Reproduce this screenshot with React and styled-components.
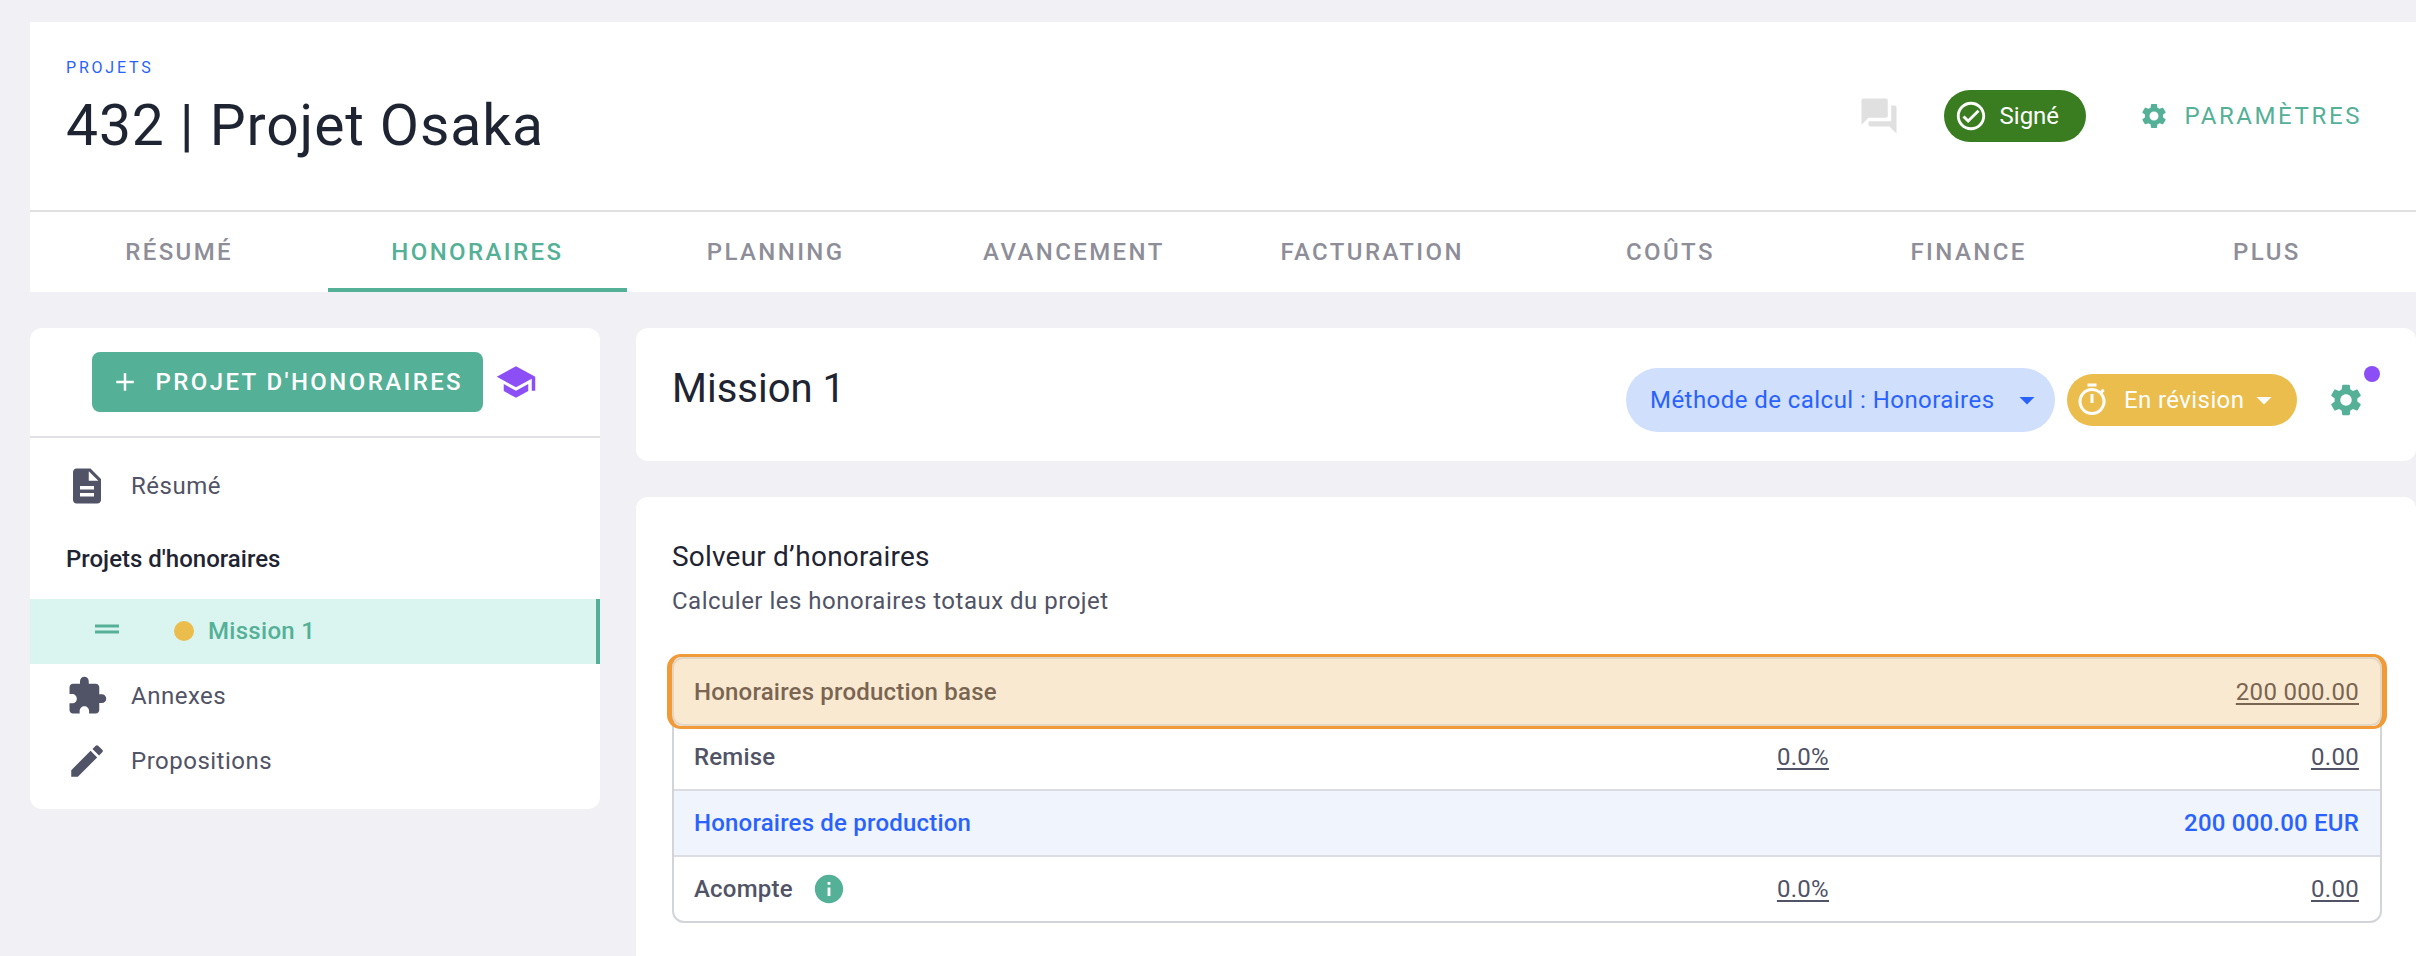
import React from "react"
import styled, { createGlobalStyle } from "styled-components"
import {
    MdAdd,
    MdArrowDropDown,
    MdDescription,
    MdDragHandle,
    MdEdit,
    MdExtension,
    MdInfo,
    MdOutlineCheckCircle,
    MdOutlineTimer,
    MdQuestionAnswer,
    MdSchool,
    MdSettings,
} from "react-icons/md"

const green = "#54b096"
const blue = "#2962ff"
const ink = "#1f2433"
const slate = "#515366"

const GlobalStyle = createGlobalStyle`
    html, body {
        margin: 0;
        height: 100%;
        overflow: hidden;
        background: #f0f0f5;
        font-family: Roboto, "Liberation Sans", sans-serif;
    }
`

const tabs = ["Résumé", "Honoraires", "Planning", "Avancement", "Facturation", "Coûts", "Finance", "Plus"]

export default function App() {
    return (
        <Page>
            <GlobalStyle />
            <Header>
                <HeaderTop>
                    <div>
                        <Eyebrow>Projets</Eyebrow>
                        <Title>432 | Projet Osaka</Title>
                    </div>
                    <HeaderActions>
                        <MdQuestionAnswer size={42} color="#e0e0e0" />
                        <SignedPill>
                            <MdOutlineCheckCircle size={34} />
                            Signé
                        </SignedPill>
                        <SettingsLink>
                            <MdSettings size={30} />
                            Paramètres
                        </SettingsLink>
                    </HeaderActions>
                </HeaderTop>
                <Tabs>
                    {tabs.map(tab => (
                        <Tab key={tab} $active={tab === "Honoraires"}>
                            {tab}
                        </Tab>
                    ))}
                </Tabs>
            </Header>
            <Columns>
                <Sidebar>
                    <SidebarTop>
                        <AddButton>
                            <MdAdd size={30} />
                            Projet d'honoraires
                        </AddButton>
                        <MdSchool size={42} color="#8b4ff5" />
                    </SidebarTop>
                    <SideList>
                        <SideItem $height={64}>
                            <SideIcon>
                                <MdDescription size={42} />
                            </SideIcon>
                            Résumé
                        </SideItem>
                        <SideHeading>Projets d'honoraires</SideHeading>
                        <ActiveItem>
                            <DragHandle size={36} />
                            <Dot />
                            Mission 1
                        </ActiveItem>
                        <SideItem $height={65}>
                            <SideIcon>
                                <MdExtension size={42} />
                            </SideIcon>
                            Annexes
                        </SideItem>
                        <SideItem $height={65}>
                            <SideIcon>
                                <MdEdit size={42} />
                            </SideIcon>
                            Propositions
                        </SideItem>
                    </SideList>
                </Sidebar>
                <Main>
                    <MissionCard>
                        <MissionTitle>Mission 1</MissionTitle>
                        <MissionActions>
                            <MethodPill>
                                Méthode de calcul : Honoraires
                                <MdArrowDropDown size={36} />
                            </MethodPill>
                            <StatusPill>
                                <MdOutlineTimer size={36} />
                                En révision
                                <StatusCaret size={36} />
                            </StatusPill>
                            <GearWrap>
                                <MdSettings size={38} />
                                <PurpleDot />
                            </GearWrap>
                        </MissionActions>
                    </MissionCard>
                    <SolverCard>
                        <SolverTitle>Solveur d’honoraires</SolverTitle>
                        <SolverText>Calculer les honoraires totaux du projet</SolverText>
                        <FeeTable>
                            <FeeRow $kind="base">
                                <span>Honoraires production base</span>
                                <span />
                                <Amount>200 000.00</Amount>
                            </FeeRow>
                            <FeeRow>
                                <span>Remise</span>
                                <Amount>0.0%</Amount>
                                <Amount>0.00</Amount>
                            </FeeRow>
                            <FeeRow $kind="total">
                                <span>Honoraires de production</span>
                                <span />
                                <span>200 000.00 EUR</span>
                            </FeeRow>
                            <FeeRow>
                                <FeeLabel>
                                    Acompte
                                    <MdInfo size={34} color={green} />
                                </FeeLabel>
                                <Amount>0.0%</Amount>
                                <Amount>0.00</Amount>
                            </FeeRow>
                        </FeeTable>
                    </SolverCard>
                </Main>
            </Columns>
        </Page>
    )
}

const Page = styled.div`
    height: 956px;
    overflow: hidden;
    padding: 22px 0 0 30px;
    box-sizing: border-box;
`

const Header = styled.header`
    background: #fff;
`

const HeaderTop = styled.div`
    height: 190px;
    box-sizing: border-box;
    padding: 36px 54px 0 36px;
    display: flex;
    justify-content: space-between;
    border-bottom: 2px solid #e0e0e0;
`

const Eyebrow = styled.div`
    font-size: 16px;
    line-height: 20px;
    letter-spacing: 2.8px;
    text-transform: uppercase;
    color: ${blue};
`

const Title = styled.h1`
    margin: 12px 0 0;
    font-size: 57px;
    line-height: 72px;
    font-weight: 400;
    letter-spacing: 0.9px;
    color: ${ink};
`

const HeaderActions = styled.div`
    display: flex;
    align-items: center;
    height: 52px;
    margin-top: 32px;
`

const SignedPill = styled.div`
    display: flex;
    align-items: center;
    gap: 12px;
    box-sizing: border-box;
    width: 142px;
    height: 52px;
    margin: 0 53px 0 44px;
    padding-left: 10px;
    border-radius: 26px;
    background: #3a7d21;
    color: #fff;
    font-size: 24px;
`

const SettingsLink = styled.div`
    display: flex;
    align-items: center;
    gap: 16px;
    color: ${green};
    font-size: 24px;
    letter-spacing: 2.6px;
    text-transform: uppercase;
`

const Tabs = styled.nav`
    display: grid;
    grid-template-columns: repeat(8, 1fr);
    height: 80px;
`

const Tab = styled.div`
    display: flex;
    align-items: center;
    justify-content: center;
    font-size: 24px;
    font-weight: 500;
    letter-spacing: 2.4px;
    text-transform: uppercase;
    color: ${p => (p.$active ? green : "#8e8e99")};
    box-shadow: ${p => (p.$active ? `inset 0 -4px 0 ${green}` : "none")};
`

const Columns = styled.div`
    display: grid;
    grid-template-columns: 570px 1fr;
    gap: 36px;
    margin-top: 36px;
    align-items: start;
`

const Sidebar = styled.aside`
    background: #fff;
    border-radius: 12px;
    height: 481px;
    overflow: hidden;
`

const SidebarTop = styled.div`
    display: flex;
    align-items: center;
    justify-content: center;
    gap: 12px;
    height: 110px;
    box-sizing: border-box;
    padding-right: 2px;
    border-bottom: 2px solid #e0e0e5;
`

const AddButton = styled.div`
    display: flex;
    align-items: center;
    gap: 16px;
    box-sizing: border-box;
    width: 391px;
    height: 60px;
    padding-left: 18px;
    border-radius: 8px;
    background: ${green};
    color: #fff;
    font-size: 24px;
    font-weight: 500;
    letter-spacing: 2.4px;
    text-transform: uppercase;
`

const SideList = styled.div`
    padding-top: 17px;
`

const SideItem = styled.div`
    display: flex;
    align-items: center;
    height: ${p => p.$height}px;
    box-sizing: border-box;
    padding: 0 0 2px 36px;
    font-size: 24px;
    letter-spacing: 0.5px;
    color: ${slate};
`

const SideIcon = styled.span`
    display: flex;
    justify-content: center;
    width: 42px;
    margin-right: 23px;
`

const SideHeading = styled.div`
    display: flex;
    align-items: center;
    height: 80px;
    padding-left: 36px;
    font-size: 24px;
    font-weight: 500;
    color: ${ink};
`

const ActiveItem = styled.div`
    display: flex;
    align-items: center;
    height: 65px;
    box-sizing: border-box;
    padding: 0 0 2px 59px;
    background: #daf5ef;
    border-right: 4px solid ${green};
    color: ${green};
    font-size: 24px;
    font-weight: 500;
    letter-spacing: 0.3px;
`

const DragHandle = styled(MdDragHandle)`
    margin-bottom: 4px;
`

const Dot = styled.span`
    width: 20px;
    height: 20px;
    margin: 0 14px 0 49px;
    border-radius: 50%;
    background: #eabd4d;
`

const Main = styled.main`
    display: flex;
    flex-direction: column;
    gap: 36px;
`

const MissionCard = styled.section`
    display: flex;
    justify-content: space-between;
    height: 133px;
    box-sizing: border-box;
    padding: 33px 36px;
    background: #fff;
    border-radius: 12px;
`

const MissionTitle = styled.h2`
    margin: 0;
    font-size: 40px;
    line-height: 56px;
    font-weight: 400;
    color: ${ink};
`

const MissionActions = styled.div`
    display: flex;
    align-items: center;
    height: 64px;
    margin-top: 7px;
    margin-right: 15px;
`

const MethodPill = styled.div`
    display: flex;
    align-items: center;
    justify-content: space-between;
    box-sizing: border-box;
    width: 429px;
    height: 64px;
    padding: 0 10px 0 24px;
    border-radius: 32px;
    background: #d0dffc;
    color: ${blue};
    font-size: 24px;
    letter-spacing: 0.45px;
`

const StatusPill = styled.div`
    display: flex;
    align-items: center;
    gap: 14px;
    box-sizing: border-box;
    width: 230px;
    height: 52px;
    margin-left: 12px;
    padding-left: 7px;
    border-radius: 26px;
    background: #eabd4d;
    color: #fff;
    font-size: 24px;
    letter-spacing: 0.4px;
`

const StatusCaret = styled(MdArrowDropDown)`
    margin-left: -12px;
`

const GearWrap = styled.div`
    position: relative;
    display: flex;
    margin-left: 30px;
    color: ${green};
`

const PurpleDot = styled.span`
    position: absolute;
    top: -15px;
    right: -15px;
    width: 16px;
    height: 16px;
    border-radius: 50%;
    background: #8b4ff5;
`

const SolverCard = styled.section`
    height: 600px;
    box-sizing: border-box;
    padding: 42px 36px;
    background: #fff;
    border-radius: 12px;
`

const SolverTitle = styled.h3`
    margin: 0;
    font-size: 28px;
    line-height: 36px;
    font-weight: 400;
    letter-spacing: 0.2px;
    color: ${ink};
`

const SolverText = styled.p`
    margin: 8px 0 0;
    font-size: 24px;
    line-height: 36px;
    letter-spacing: 0.5px;
    color: ${slate};
`

const FeeTable = styled.div`
    margin: 38px -2px 0 0;
    border: 2px solid #d3d4da;
    border-radius: 12px;
`

const FeeRow = styled.div`
    display: grid;
    grid-template-columns: 1fr 100px 530px;
    align-items: center;
    height: 66px;
    box-sizing: border-box;
    padding: 0 21px 0 20px;
    font-size: 24px;
    font-weight: 500;
    letter-spacing: 0.2px;
    border-bottom: 2px solid #dcdde2;
    color: ${slate};
    & > :nth-child(2),
    & > :nth-child(3) {
        text-align: right;
    }
    &:last-child {
        height: 64px;
        border-bottom: 0;
    }
    ${p =>
        p.$kind === "base" &&
        `
        position: relative;
        height: 65px;
        margin-bottom: 1px;
        background: #f9e9d0;
        color: #7a6552;
        border-radius: 9px;
        border-bottom: 0;
        box-shadow: 0 0 0 2px #e3d7c4;
        &::after {
            content: "";
            position: absolute;
            inset: -5px -7px;
            border-style: solid;
            border-color: #f09a38;
            border-width: 3px 5px;
            border-radius: 14px;
        }
    `}
    ${p =>
        p.$kind === "total" &&
        `
        background: #f0f4fd;
        color: ${blue};
    `}
`

const FeeLabel = styled.span`
    display: flex;
    align-items: center;
    gap: 19px;
`

const Amount = styled.span`
    font-weight: 400;
    letter-spacing: 0.3px;
    text-decoration: underline;
    text-underline-offset: 3px;
`
